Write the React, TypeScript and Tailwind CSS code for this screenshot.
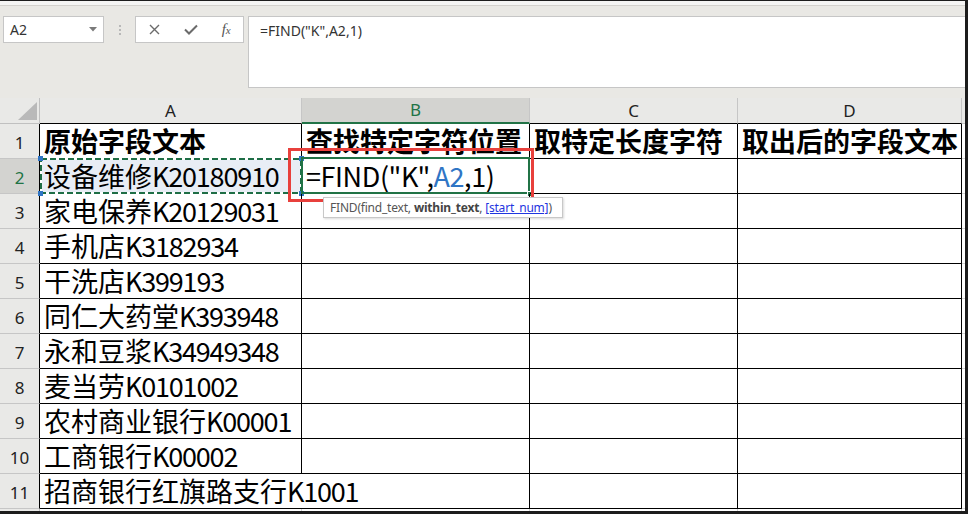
import React from "react";

const CJK = /[\u3000-\u9fff\uff00-\uffef]/;

function Txt({ s }: { s: string }) {
  const parts = s.match(/[\u3000-\u9fff\uff00-\uffef]+|[^\u3000-\u9fff\uff00-\uffef]+/g) || [];
  return (
    <>
      {parts.map((p, i) =>
        CJK.test(p) ? (
          <span key={i} className="inline-block align-top h-[34px] leading-[34px]">{p}</span>
        ) : (
          <span key={i} className="inline-block align-top h-[34px] leading-[34px] tracking-[-1.2px]">
            {p}
          </span>
        )
      )}
    </>
  );
}

const rows: string[][] = [
  ["原始字段文本", "查找特定字符位置", "取特定长度字符", "取出后的字段文本"],
  ["设备维修K20180910", "", "", ""],
  ["家电保养K20129031", "", "", ""],
  ["手机店K3182934", "", "", ""],
  ["干洗店K399193", "", "", ""],
  ["同仁大药堂K393948", "", "", ""],
  ["永和豆浆K34949348", "", "", ""],
  ["麦当劳K0101002", "", "", ""],
  ["农村商业银行K00001", "", "", ""],
  ["工商银行K00002", "", "", ""],
  ["招商银行红旗路支行K1001", "", "", ""],
];

const widths = ["w-[262px]", "w-[228px]", "w-[208px]", "w-[224px]"];

export default function App() {
  return (
    <div className="w-[968px] h-[514px] bg-[#1c1c1c] pt-px pr-[3px] pb-[3px] overflow-hidden">
      <div className="relative w-full h-full bg-[#e9e8e4] flex flex-col overflow-hidden font-['Noto_Sans',sans-serif]">
        {/* top strip */}
        <div className="h-[5px] shrink-0 bg-[#f4f4f3] border-b border-[#d3d1cd]" />
        {/* formula toolbar */}
        <div className="h-[82px] shrink-0 flex items-start pl-[3px] pt-[10px]">
          <div className="w-[101px] h-[27px] bg-white border border-[#c6c6c6] flex items-center justify-between pl-[6px] pr-[6px] text-[14px] text-[#333]">
            <span>A2</span>
            <svg width="8" height="5" viewBox="0 0 8 5">
              <path d="M0 0 L8 0 L4 4.5 Z" fill="#7a7a7a" />
            </svg>
          </div>
          <div className="w-[31px] h-[27px] flex flex-col items-center justify-center gap-[2px]">
            <span className="w-[2px] h-[2px] bg-[#b8b8b8]" />
            <span className="w-[2px] h-[2px] bg-[#b8b8b8]" />
            <span className="w-[2px] h-[2px] bg-[#b8b8b8]" />
          </div>
          <div className="w-[109px] h-[27px] bg-white border border-[#c6c6c6] flex items-center">
            <div className="w-[36px] flex justify-center pl-[2px]">
              <svg width="11" height="11" viewBox="0 0 11 11">
                <path d="M1 1 L10 10 M10 1 L1 10" stroke="#6b6b6b" strokeWidth="1.4" />
              </svg>
            </div>
            <div className="w-[36px] flex justify-center pl-[2px]">
              <svg width="14" height="11" viewBox="0 0 14 11">
                <path d="M1 5.5 L5 9.5 L13 1.5" stroke="#6b6b6b" strokeWidth="2" fill="none" />
              </svg>
            </div>
            <div className="w-[36px] flex justify-center pl-[2px] font-['Liberation_Serif',serif] italic text-[#555] text-[15px] leading-none">
              f<span className="text-[11px] mt-[3px]">x</span>
            </div>
          </div>
          <div className="ml-[4px] flex-1 h-[72px] bg-white border-l border-t border-b border-[#c6c6c6] pl-[11px] pt-[3px] text-[14px] text-[#333] whitespace-nowrap">
            =FIND("K",A2,1)
          </div>
        </div>
        <div className="h-[10px] shrink-0" />
        {/* column headers */}
        <div className="h-[26px] shrink-0 flex text-[17px] text-[#222] font-['Noto_Sans',sans-serif]">
          <div className="w-[40px] h-full bg-[#e9e9e7] border-r border-b border-[#c0c0c0] relative">
            <svg width="40" height="26" className="absolute left-0 top-0">
              <path d="M37 4 L37 22 L18 22 Z" fill="#b9b9b9" />
            </svg>
          </div>
          <div className="w-[262px] h-full bg-[#e9e9e7] border-r border-[#c6c6c6] border-b border-b-black flex items-center justify-center">A</div>
          <div className="w-[228px] h-full bg-[#d3d3d0] border-r border-[#c6c6c6] border-b-2 border-b-[#217346] flex items-center justify-center text-[#217346]">B</div>
          <div className="w-[208px] h-full bg-[#e9e9e7] border-r border-[#c6c6c6] border-b border-b-black flex items-center justify-center">C</div>
          <div className="w-[224px] h-full bg-[#e9e9e7] border-r border-[#c6c6c6] border-b border-b-black flex items-center justify-center">D</div>
          <div className="flex-1 h-full bg-[#e9e9e7] border-b border-[#c6c6c6]" />
        </div>
        {/* rows */}
        <div className="flex flex-col bg-white font-['Noto_Sans_CJK_SC',sans-serif] text-[27px] text-black">
          {rows.map((r, ri) => {
            const n = ri + 1;
            const sel = n === 2;
            return (
              <div key={ri} className="h-[35px] shrink-0 flex">
                <div
                  className={
                    "w-[40px] h-full border-r border-r-black border-b border-b-[#c6c6c6] flex items-center justify-center pt-[4px] text-[17px] font-['Noto_Sans',sans-serif] " +
                    (sel ? "bg-[#d3d3d0] text-[#217346]" : "bg-[#e9e9e7] text-[#222]")
                  }
                >
                  {n}
                </div>
                {r.map((c, ci) => {
                  const last = n === 11;
                  const noRight = last && ci === 0;
                  const isA2 = n === 2 && ci === 0;
                  const isB2 = n === 2 && ci === 1;
                  return (
                    <div
                      key={ci}
                      className={
                        widths[ci] +
                        " h-full relative border-b border-b-black whitespace-nowrap leading-[34px] pl-[4px] " +
                        (noRight ? "" : "border-r border-r-black ") +
                        (n === 1 ? "font-bold " : "") +
                        (isA2 ? "bg-[#e8edf5] " : "") +
                        (last && ci === 0 ? "z-10" : "")
                      }
                    >
                      {isB2 ? (
                        <>
                          <span className="inline-block align-top h-[34px] leading-[34px] tracking-[-0.4px]">=FIND("K",</span>
                          <span className="inline-block align-top h-[34px] leading-[34px] tracking-[-0.4px] text-[#2f75c5]">A2</span>
                          <span className="inline-block align-top h-[34px] leading-[34px] tracking-[-0.4px]">,1)</span>
                        </>
                      ) : (
                        <Txt s={c} />
                      )}
                      {isA2 && (
                        <svg className="absolute left-[0px] top-[-1px] overflow-visible" width="262" height="36">
                          <rect x="1" y="1" width="260" height="34" fill="none" stroke="#ffffff" strokeWidth="2" />
                          <rect x="1" y="1" width="260" height="34" fill="none" stroke="#1e6e46" strokeWidth="2" strokeDasharray="6 3" />
                          <rect x="-2" y="-2" width="5" height="5" fill="#2f75c5" />
                          <rect x="259" y="-2" width="5" height="5" fill="#2f75c5" />
                          <rect x="-2" y="33" width="5" height="5" fill="#2f75c5" />
                          <rect x="259" y="33" width="5" height="5" fill="#2f75c5" />
                        </svg>
                      )}
                      {isB2 && (
                        <>
                          <div className="absolute left-[-1px] top-[-2px] right-[-1px] bottom-[-1px] border-2 border-[#217346]" />
                          <div className="absolute right-[-4px] bottom-[-4px] w-[6px] h-[6px] bg-[#217346] border border-white" />
                        </>
                      )}
                    </div>
                  );
                })}
                <div className="flex-1 h-full border-b border-[#d4d4d4]" />
              </div>
            );
          })}
          <div className="h-[35px] shrink-0 flex">
            <div className="w-[40px] h-full bg-[#e9e9e7] border-r border-[#c0c0c0]" />
            <div className="w-[262px] h-full border-r border-[#d4d4d4]" />
            <div className="w-[228px] h-full border-r border-[#d4d4d4]" />
            <div className="w-[208px] h-full border-r border-[#d4d4d4]" />
            <div className="w-[224px] h-full border-r border-[#d4d4d4]" />
          </div>
        </div>
        {/* red annotation box */}
        <div className="absolute left-[288px] top-[147px] w-[246px] h-[54px] border-[3px] border-[#e8403c] z-20" />
        {/* function tooltip */}
        <div className="absolute left-[323px] top-[196px] w-[240px] h-[21px] bg-white border border-[#c8c8c8] shadow-[1px_1px_2px_rgba(0,0,0,0.15)] z-20 flex items-center pl-[6px] text-[12px] tracking-[-0.2px] text-[#555] whitespace-nowrap font-['Noto_Sans',sans-serif]">
          FIND(find_text, <span className="font-bold text-[#444] ml-[3px]">within_text</span>, <span className="ml-[3px] text-[#1f36e0] underline">[start_num]</span>)
        </div>
      </div>
    </div>
  );
}
